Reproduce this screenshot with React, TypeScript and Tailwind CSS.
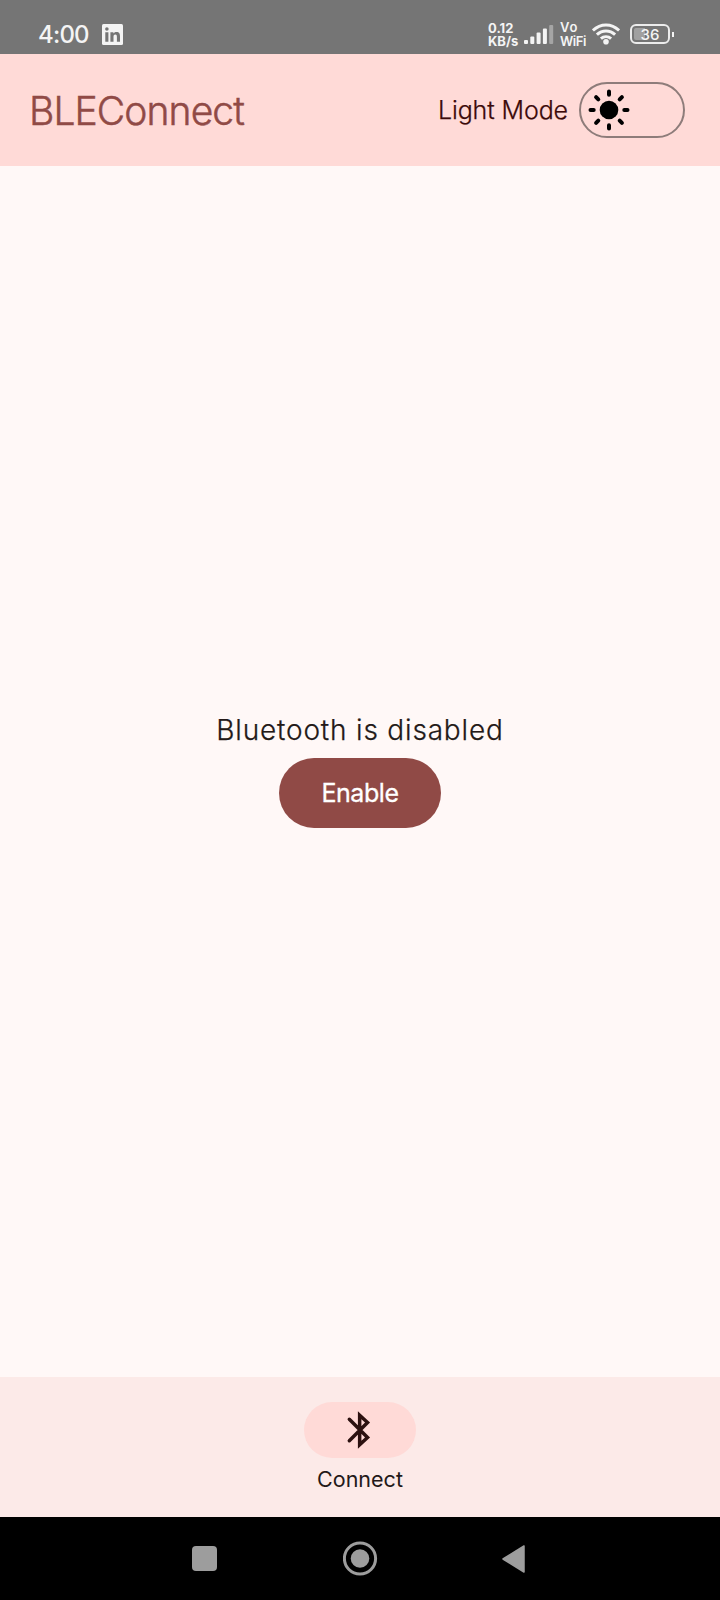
import React from "react";

const font = "font-['Inter','Liberation_Sans',sans-serif]";

function StatusBar() {
  return (
    <div className="flex h-[54px] shrink-0 items-start bg-[#757575] pl-[38px] text-[#f4f4f4]">
      <span className="mt-[17px] w-[63px] whitespace-nowrap text-[24px] leading-[35px] font-medium tracking-[-0.8px]">4:00</span>
      <svg className="mt-6 mr-[365px] ml-px h-[21px] w-[21px] shrink-0" viewBox="0 0 21 21">
        <rect width="21" height="21" rx="1.5" fill="#f4f4f4" />
        <g fill="#757575">
          <circle cx="4.9" cy="5" r="1.8" />
          <path d="M3.3 8.2h3.1v9.6H3.3zM8.4 8.2h3v1.3c.5-.9 1.6-1.6 3.1-1.6 2.9 0 3.5 1.9 3.5 4.5v5.4h-3.1V13c0-1.3-.1-2.5-1.6-2.5s-1.8 1.2-1.8 2.4v4.9H8.4z" />
        </g>
      </svg>
      <div className="mt-[22px] w-[37px] shrink-0 text-[13px] font-bold whitespace-nowrap">
        <div className="h-[13px] leading-[12px]">0.12</div>
        <div className="h-[13px] leading-[13px]">KB/s</div>
      </div>
      <svg className="mt-6 -ml-px mr-px h-5 w-[30px] shrink-0" viewBox="0 0 30 20">
        <g fill="#f4f4f4">
          <rect x="0" y="16" width="4" height="4" rx="1" />
          <rect x="6.3" y="12.5" width="4" height="7.5" rx="1" />
          <rect x="12.6" y="8.5" width="4" height="11.5" rx="1" />
          <rect x="18.9" y="4.5" width="4" height="15.5" rx="1" />
        </g>
        <rect x="25.2" y="1" width="4" height="19" rx="1" fill="#a5a5a5" />
      </svg>
      <div className="mt-[21px] ml-[5px] w-[32px] shrink-0 text-[13px] font-semibold whitespace-nowrap">
        <div className="h-[14px] leading-[13px] tracking-[0.8px]">Vo</div>
        <div className="h-[13px] leading-[13px] tracking-[-0.4px]">WiFi</div>
      </div>
      <svg className="mt-[23px] h-[22px] w-[28px] shrink-0" viewBox="0 0 28 22">
        <g fill="none" stroke="#f4f4f4" strokeWidth="3">
          <path d="M.9 7.5C8.5.1 19.5.1 27.1 7.5" />
          <path d="M4.9 11.7c5.3-5 12.9-5 18.2 0" />
          <path d="M8.9 15.7c3-2.7 7.2-2.7 10.2 0" />
        </g>
        <circle cx="14" cy="18.7" r="2.8" fill="#f4f4f4" />
      </svg>
      <div className="mt-6 ml-[10px] flex shrink-0 items-center">
        <div className="flex h-5 w-10 items-center justify-center rounded-[6px] border-2 border-[#ececec] bg-linear-to-r from-[#a0a0a0] from-36% to-[#757575] to-36% bg-clip-content p-[2px] text-[15px] leading-none font-medium">36</div>
        <div className="ml-[2px] h-[5px] w-[2px] bg-[#f4f4f4]" />
      </div>
    </div>
  );
}

function Sun() {
  return (
    <svg className="h-[42px] w-[42px]" viewBox="-21 -21 42 42">
      <circle r="9.3" />
      <g stroke="#000" strokeWidth="4" strokeLinecap="round">
        <path d="M0-15.3V-18.5M0 15.3V18.5M-15.3 0H-18.5M15.3 0H18.5" />
        <path d="M-10.7-10.7-12.9-12.9M10.7-10.7 12.9-12.9M-10.7 10.7-12.9 12.9M10.7 10.7 12.9 12.9" />
      </g>
    </svg>
  );
}

function Header() {
  return (
    <header className="flex h-28 shrink-0 items-center justify-between bg-[#ffdad7] pr-[35px] pl-[29px]">
      <h1 className="pt-px text-[39px] leading-none font-light tracking-[-0.9px] text-[#904a46] [-webkit-text-stroke:0.5px_currentColor]">BLEConnect</h1>
      <div className="flex items-center">
        <span className="mr-[11px] pt-[2px] text-[25px] font-light tracking-[-0.1px] whitespace-nowrap text-[#3b0909] [-webkit-text-stroke:0.25px_currentColor]">Light Mode</span>
        <div role="switch" aria-checked={false} className="flex h-14 w-[106px] items-center rounded-full border-2 border-[#8e7c7a] pl-[7px]">
          <Sun />
        </div>
      </div>
    </header>
  );
}

export default function App() {
  return (
    <div className={`flex h-[1600px] w-[720px] flex-col overflow-hidden bg-[#fff8f7] ${font}`}>
      <StatusBar />
      <Header />
      <main className="flex flex-1 flex-col items-center pt-[540px]">
        <p className="h-[52px] text-[28px] leading-[48px] font-light tracking-[0.82px] whitespace-nowrap text-[#231918] [-webkit-text-stroke:0.25px_currentColor]">Bluetooth is disabled</p>
        <button className="h-[70px] w-[162px] rounded-full bg-[#904a46] pt-[2px] text-[25px] font-normal tracking-[-0.45px] text-white [-webkit-text-stroke:0.3px_currentColor]">Enable</button>
      </main>
      <nav className="flex h-[140px] shrink-0 flex-col items-center bg-[#fceae8] pt-[25px]">
        <div className="flex h-14 w-28 items-center justify-center rounded-full bg-[#ffdad7]">
          <svg className="h-[42px] w-[42px]" viewBox="0 0 24 24" fill="none" stroke="#2c1110" strokeWidth="2" strokeLinecap="round">
            <path d="M5.9 5.9 16.3 16.29 11.8 20.4V3.6L16.3 7.71 5.9 18.1" />
          </svg>
        </div>
        <span className="mt-[4px] text-[21.5px] leading-[34px] font-normal text-[#231918]">Connect</span>
      </nav>
      <div className="flex h-[83px] shrink-0 items-center bg-black pl-[192px]">
        <div className="h-[25px] w-[25px] rounded-[4px] bg-[#9d9d9d]" />
        <svg className="ml-[126px] h-[35px] w-[35px]" viewBox="0 0 35 35">
          <circle cx="17" cy="17.5" r="15.6" fill="none" stroke="#9d9d9d" strokeWidth="3" />
          <circle cx="17" cy="17.5" r="9.3" fill="#9d9d9d" />
        </svg>
        <svg className="ml-[123px] h-[30px] w-6" viewBox="0 0 24 30">
          <path d="M2 15 23 2V28Z" fill="#9d9d9d" stroke="#9d9d9d" strokeWidth="1.5" strokeLinejoin="round" />
        </svg>
      </div>
    </div>
  );
}
